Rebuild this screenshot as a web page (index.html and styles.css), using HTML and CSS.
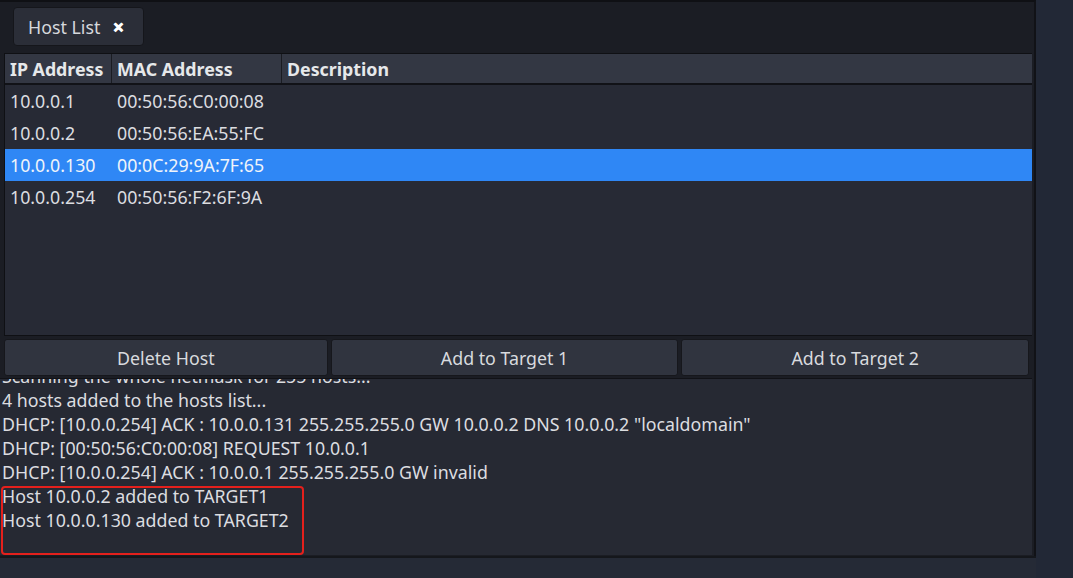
FILE: index.html
```html
<!DOCTYPE html>
<html>
<head>
<meta charset="utf-8">
<link rel="stylesheet" href="styles.css">
</head>
<body>
<div class="desk">
  <div class="window">
    <div class="tabbar">
      <div class="tab"><span class="tab-label">Host List</span><span class="tab-close">✕</span></div>
    </div>
    <div class="table">
      <div class="thead">
        <div class="th c-ip">IP Address</div>
        <div class="th c-mac">MAC Address</div>
        <div class="th c-desc">Description</div>
      </div>
      <div class="tbody">
        <div class="tr"><div class="td c-ip">10.0.0.1</div><div class="td c-mac">00:50:56:C0:00:08</div><div class="td c-desc"></div></div>
        <div class="tr"><div class="td c-ip">10.0.0.2</div><div class="td c-mac">00:50:56:EA:55:FC</div><div class="td c-desc"></div></div>
        <div class="tr sel"><div class="td c-ip">10.0.0.130</div><div class="td c-mac">00:0C:29:9A:7F:65</div><div class="td c-desc"></div></div>
        <div class="tr"><div class="td c-ip">10.0.0.254</div><div class="td c-mac">00:50:56:F2:6F:9A</div><div class="td c-desc"></div></div>
      </div>
    </div>
    <div class="buttons">
      <div class="btn b1">Delete Host</div>
      <div class="btn b2">Add to Target 1</div>
      <div class="btn b3">Add to Target 2</div>
    </div>
    <div class="log">
      <div class="log-inner">
        <div class="line">Scanning the whole netmask for 255 hosts...</div>
        <div class="line">4 hosts added to the hosts list...</div>
        <div class="line">DHCP: [10.0.0.254] ACK : 10.0.0.131 255.255.255.0 GW 10.0.0.2 DNS 10.0.0.2 "localdomain"</div>
        <div class="line">DHCP: [00:50:56:C0:00:08] REQUEST 10.0.0.1</div>
        <div class="line">DHCP: [10.0.0.254] ACK : 10.0.0.1 255.255.255.0 GW invalid</div>
        <div class="line">Host 10.0.0.2 added to TARGET1</div>
        <div class="line">Host 10.0.0.130 added to TARGET2</div>
      </div>
      <div class="highlight"></div>
    </div>
  </div>
  <div class="bottom"></div>
</div>
</body>
</html>
```
FILE: styles.css
```css
html, body {
  margin: 0;
  padding: 0;
}
body {
  width: 1073px;
  height: 578px;
  overflow: hidden;
  background: #222836;
  font-family: "Noto Sans", "Open Sans", sans-serif;
  font-size: 17.8px;
  color: #dcdcdc;
}
.desk {
  width: 1073px;
  height: 578px;
  display: flex;
  flex-direction: column;
}
.window {
  width: 1034px;
  height: 556px;
  background: #1b1d24;
  border-top: 2px solid #0f1014;
  border-right: 2px solid #111217;
  display: flex;
  flex-direction: column;
  box-sizing: content-box;
}
.bottom {
  width: 1036px;
  height: 20px;
  background: #252a36;
  border-top: 2px solid #15171c;
}
.tabbar {
  height: 51px;
  padding: 5px 0 0 13px;
  box-sizing: border-box;
}
.tab {
  width: 131px;
  height: 39px;
  background: #2b2e38;
  border: 1px solid #15161b;
  border-radius: 4px;
  box-sizing: border-box;
  display: flex;
  align-items: center;
  padding-left: 14px;
  gap: 13px;
}
.tab-label {
  color: #d6d8dc;
}
.tab-close {
  font-size: 13px;
  font-weight: bold;
  color: #ffffff;
  -webkit-text-stroke: 1px #ffffff;
}
.table {
  margin-left: 4px;
  width: 1028px;
  height: 283px;
  border: 1px solid #0f1014;
  border-right: 0;
  background: #272a35;
  box-sizing: border-box;
  display: flex;
  flex-direction: column;
}
.thead {
  display: flex;
  height: 31px;
  background: #333743;
  border-bottom: 2px solid #111217;
  box-sizing: border-box;
}
.th {
  font-weight: bold;
  color: #e6e8ea;
  display: flex;
  align-items: center;
  padding-left: 5px;
  box-sizing: border-box;
  border-right: 1px solid #1a1c22;
}
.c-ip { width: 107px; }
.c-mac { width: 170px; }
.c-desc { flex: 1; border-right: 0; }
.tbody {
  display: flex;
  flex-direction: column;
}
.tr {
  display: flex;
  height: 32px;
}
.td {
  display: flex;
  align-items: center;
  padding-left: 5px;
  box-sizing: border-box;
  color: #dcdde0;
}
.tr.sel {
  background: #2f87f5;
}
.tr.sel .td {
  color: #f0f4fa;
}
.buttons {
  display: flex;
  gap: 3px;
  padding: 3px 5px 0 4px;
  height: 42px;
  box-sizing: border-box;
}
.btn {
  height: 37px;
  background: #30343f;
  border: 1px solid #16171c;
  border-radius: 3px;
  box-sizing: border-box;
  display: flex;
  align-items: center;
  justify-content: center;
  color: #d8dade;
}
.b1 { width: 325px; }
.b2 { width: 349px; }
.b3 { width: 349px; }
.log {
  position: relative;
  width: 1032px;
  height: 177px;
  background: #262933;
  border-top: 1px solid #111217;
  box-sizing: border-box;
  overflow: hidden;
}
.log-inner {
  margin-top: -15px;
  padding-left: 2px;
}
.line {
  height: 24px;
  line-height: 24px;
  white-space: nowrap;
  color: #dcdde0;
}
.highlight {
  position: absolute;
  left: 1px;
  top: 107px;
  width: 303px;
  height: 69px;
  border: 2px solid #e4201c;
  border-radius: 4px;
  box-sizing: border-box;
}
```
